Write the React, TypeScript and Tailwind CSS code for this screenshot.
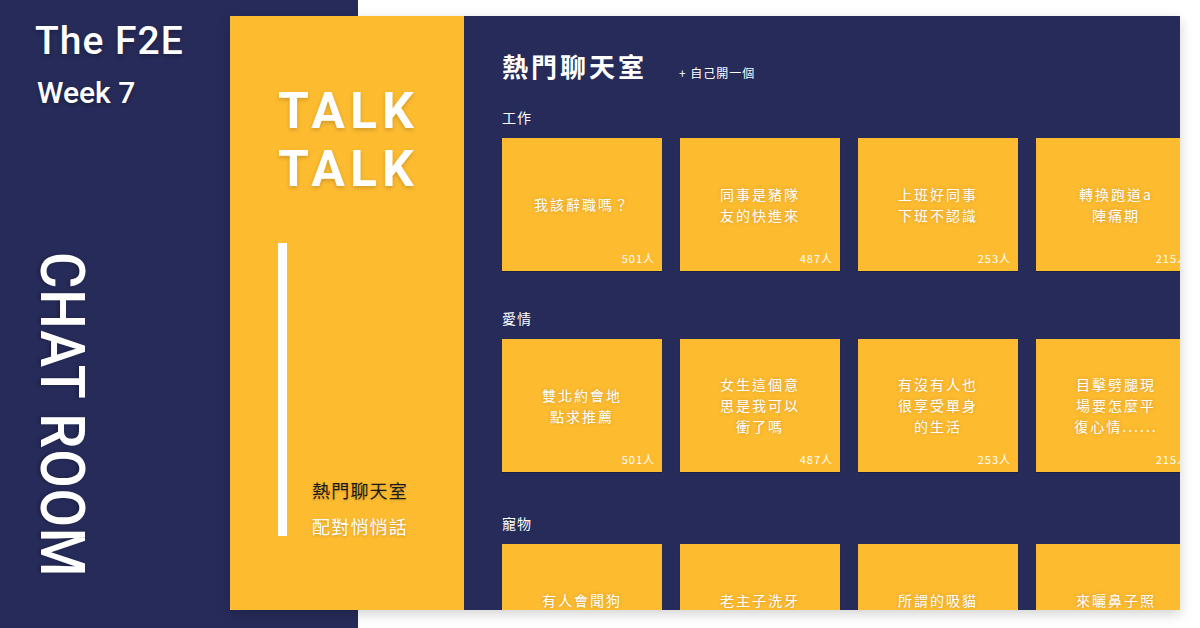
const NAVY = "bg-[#262b59]";

type Room = { title: string[]; count?: string };

const SECTIONS: { label: string; rooms: Room[]; last?: boolean }[] = [
  {
    label: "工作",
    rooms: [
      { title: ["我該辭職嗎？"], count: "501人" },
      { title: ["同事是豬隊", "友的快進來"], count: "487人" },
      { title: ["上班好同事", "下班不認識"], count: "253人" },
      { title: ["轉換跑道a", "陣痛期"], count: "215人" },
    ],
  },
  {
    label: "愛情",
    rooms: [
      { title: ["雙北約會地", "點求推薦"], count: "501人" },
      { title: ["女生這個意", "思是我可以", "衝了嗎"], count: "487人" },
      { title: ["有沒有人也", "很享受單身", "的生活"], count: "253人" },
      { title: ["目擊劈腿現", "場要怎麼平", "復心情......"], count: "215人" },
    ],
  },
  {
    label: "寵物",
    last: true,
    rooms: [
      { title: ["有人會聞狗"] },
      { title: ["老主子洗牙"] },
      { title: ["所謂的吸貓"] },
      { title: ["來曬鼻子照"] },
    ],
  },
];

const cjk = "font-['Noto_Sans_CJK_TC','Noto_Sans',sans-serif]";

function RoomCard({ room, last }: { room: Room; last?: boolean }) {
  return (
    <div className="relative flex h-[133px] w-[160px] shrink-0 flex-col items-center justify-center bg-[#fdbb30] shadow-[0_1px_1px_rgba(0,0,0,0.25)]">
      <div
        className={`text-center text-[14px] leading-[21px] tracking-[2px] text-white [text-shadow:0_0_4px_rgba(0,0,0,0.18)] ${last ? "-mt-[20px]" : ""}`}
      >
        {room.title.map((t) => (
          <p key={t}>{t}</p>
        ))}
      </div>
      {room.count && (
        <span className="absolute right-[7px] bottom-[5px] text-[11px] tracking-[1px] text-white">
          {room.count}
        </span>
      )}
    </div>
  );
}

export default function App() {
  return (
    <div
      className={`flex h-[628px] w-[1200px] overflow-hidden bg-[linear-gradient(to_right,#262b59_358px,#ffffff_358px)] ${cjk}`}
    >
      {/* left cover column */}
      <div className="flex w-[230px] shrink-0 flex-col items-start pl-[35px] text-white">
        <p className="mt-[19px] font-['Roboto',sans-serif] text-[39px] leading-[44px] font-medium tracking-[1px] [text-shadow:0_2px_4px_rgba(0,0,0,0.25)]">
          The F2E
        </p>
        <p className="mt-[12px] pl-[2px] font-['Roboto',sans-serif] text-[30px] leading-[36px] font-medium [text-shadow:0_2px_4px_rgba(0,0,0,0.25)]">
          Week 7
        </p>
        <p className="mt-[141px] ml-[-4px] origin-top scale-y-[0.9] font-['Roboto',sans-serif] text-[62px] leading-[62px] font-medium tracking-[1px] [writing-mode:vertical-rl] [text-shadow:0_2px_4px_rgba(0,0,0,0.25)]">
          CHAT ROOM
        </p>
      </div>

      {/* app window */}
      <div className="mt-[16px] flex h-[594px] w-[950px] shrink-0 overflow-hidden shadow-[0_4px_12px_rgba(0,0,0,0.18)]">
        <aside className="flex w-[234px] shrink-0 flex-col bg-[#fdbb30] pl-[48px]">
          <div className="mt-[66px] font-['Roboto',sans-serif] text-[50px] leading-[58px] font-bold tracking-[5px] text-white [text-shadow:0_2px_4px_rgba(0,0,0,0.18)]">
            <p>TALK</p>
            <p>TALK</p>
          </div>
          <div className="mt-[45px] flex items-end gap-[25px]">
            <div className="h-[293px] w-[9px] bg-white" />
            <div className="text-[18px] leading-[20px] tracking-[1.2px]">
              <p className="text-[#1a1a1a] [text-shadow:0_1px_3px_rgba(0,0,0,0.2)]">熱門聊天室</p>
              <p className="mt-[16px] text-white [text-shadow:0_1px_3px_rgba(0,0,0,0.2)]">配對悄悄話</p>
            </div>
          </div>
        </aside>

        <main className={`flex-1 overflow-hidden ${NAVY} pl-[38px] text-white`}>
          <div className="mt-[32px] flex items-end gap-[32px]">
            <h1 className="text-[26px] leading-[36px] font-bold tracking-[3px]">熱門聊天室</h1>
            <span className="mb-[3px] text-[12px] leading-[16px] tracking-[1px]">+ 自己開一個</span>
          </div>

          <div className="mt-[23px] flex flex-col gap-[37px]">
            {SECTIONS.map((s) => (
              <section key={s.label} className={s.last ? "mt-[4px]" : ""}>
                <p className="text-[14px] leading-[20px] tracking-[1px]">{s.label}</p>
                <div className="mt-[11px] flex gap-[18px]">
                  {s.rooms.map((r) => (
                    <RoomCard key={r.title.join("")} room={r} last={s.last} />
                  ))}
                </div>
              </section>
            ))}
          </div>
        </main>
      </div>
    </div>
  );
}
